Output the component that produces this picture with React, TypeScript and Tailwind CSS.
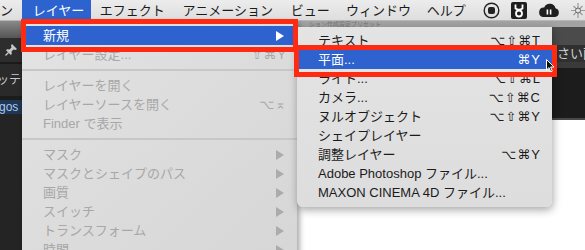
import React from "react";

const FONT = '"Liberation Sans", "DejaVu Sans", "Noto Sans CJK JP", sans-serif';

type MainItem =
  | { kind: "sep" }
  | { kind: "item"; label: string; shortcut?: string; arrow?: boolean; active?: boolean; disabled?: boolean };

const mainItems: MainItem[] = [
  { kind: "item", label: "新規", arrow: true, active: true },
  { kind: "item", label: "レイヤー設定...", shortcut: "⇧⌘Y", disabled: true },
  { kind: "sep" },
  { kind: "item", label: "レイヤーを開く", disabled: true },
  { kind: "item", label: "レイヤーソースを開く", shortcut: "⌥⌅", disabled: true },
  { kind: "item", label: "Finder で表示", disabled: true },
  { kind: "sep" },
  { kind: "item", label: "マスク", arrow: true, disabled: true },
  { kind: "item", label: "マスクとシェイプのパス", arrow: true, disabled: true },
  { kind: "item", label: "画質", arrow: true, disabled: true },
  { kind: "item", label: "スイッチ", arrow: true, disabled: true },
  { kind: "item", label: "トランスフォーム", arrow: true, disabled: true },
  { kind: "item", label: "時間", arrow: true, disabled: true },
];

const subItems: { label: string; shortcut?: string; active?: boolean }[] = [
  { label: "テキスト", shortcut: "⌥⇧⌘T" },
  { label: "平面...", shortcut: "⌘Y", active: true },
  { label: "ライト...", shortcut: "⌥⇧⌘L" },
  { label: "カメラ...", shortcut: "⌥⇧⌘C" },
  { label: "ヌルオブジェクト", shortcut: "⌥⇧⌘Y" },
  { label: "シェイプレイヤー" },
  { label: "調整レイヤー", shortcut: "⌥⌘Y" },
  { label: "Adobe Photoshop ファイル..." },
  { label: "MAXON CINEMA 4D ファイル..." },
];

function Arrow({ color }: { color: string }) {
  return (
    <svg width="8" height="10" viewBox="0 0 8 10">
      <path d="M0 0 L8 5 L0 10 Z" fill={color} />
    </svg>
  );
}

function MenuBar() {
  const items = [
    { t: "ン", w: "w-[22px]", pl: "pl-0" },
    { t: "レイヤー", w: "w-[70px]", pl: "pl-[11px]", active: true },
    { t: "エフェクト", w: "w-[84px]", pl: "pl-[9px]" },
    { t: "アニメーション", w: "w-[110px]", pl: "pl-[9px]" },
    { t: "ビュー", w: "w-[56px]", pl: "pl-[9px]" },
    { t: "ウィンドウ", w: "w-[82px]", pl: "pl-[9px]" },
    { t: "ヘルプ", w: "w-[60px]", pl: "pl-[9px]" },
  ];
  return (
    <div className="h-[21px] flex items-stretch bg-gradient-to-b from-[#ececec] to-[#dedede] border-b border-[#b8b8b8] text-[13px] text-[#1b1b1b]">
      {items.map((it) => (
        <div
          key={it.t}
          className={`${it.w} ${it.pl} flex items-center leading-none whitespace-nowrap overflow-hidden ${
            it.active ? "bg-[#2d63cf] text-white" : ""
          }`}
        >
          {it.t}
        </div>
      ))}
      <div className="flex items-center gap-[11px] pl-[6px]">
        <svg width="17" height="17" viewBox="0 0 17 17">
          <circle cx="8.5" cy="8.5" r="7.3" fill="none" stroke="#222" strokeWidth="1.4" />
          <rect x="5" y="5" width="7" height="7" rx="2" fill="#222" />
        </svg>
        <svg width="16" height="17" viewBox="0 0 16 17">
          <rect x="0" y="0" width="16" height="17" rx="2" fill="#1f1f1f" />
          <path d="M4.5 2.5 V6.5 Q8 9 11.5 6.5 V2.5" fill="none" stroke="#fff" strokeWidth="1.8" />
          <circle cx="8" cy="11.5" r="3" fill="none" stroke="#fff" strokeWidth="1.8" />
        </svg>
        <svg width="22" height="15" viewBox="0 0 22 15">
          <path
            d="M5 14 H17 A4.5 4.5 0 0 0 17.5 5.2 A6 6 0 0 0 6.2 4.5 A4.8 4.8 0 0 0 5 14 Z"
            fill="#1f1f1f"
          />
          <rect x="8.6" y="6.5" width="1.6" height="5" fill="#fff" />
          <rect x="11.8" y="6.5" width="1.6" height="5" fill="#fff" />
        </svg>
        <svg width="14" height="17" viewBox="0 0 14 17">
          <path d="M7 1 V16 M0 8.5 H14 M2.5 4 L11.5 13 M11.5 4 L2.5 13" stroke="#9a9a9a" strokeWidth="1.2" />
          <circle cx="7" cy="8.5" r="2.5" fill="#e3e3e3" stroke="#666" strokeWidth="1" />
        </svg>
      </div>
    </div>
  );
}

function Background() {
  return (
    <div className="flex h-[229px]">
      <div className="w-[22px] flex flex-col overflow-hidden">
        <div className="h-[17px] bg-gradient-to-b from-[#8a8a8a] to-[#555555]" />
        <div className="h-[24px] bg-[#2d2d2d] flex items-center justify-center">
          <svg width="12" height="12" viewBox="0 0 12 12">
            <path d="M7 0 L12 5 L10.5 6 L8.5 5.5 L6.5 7.5 L6.8 10 L5.8 11 L1 6.2 L2 5.2 L4.5 5.5 L6.5 3.5 L6 1.5 Z" fill="#c9c9c9" />
            <path d="M3.5 8.5 L0.5 11.5" stroke="#c9c9c9" strokeWidth="1.3" />
          </svg>
        </div>
        <div className="h-[2px] bg-[#1a1a1a]" />
        <div className="h-[32px] bg-[#2a2a2a] flex items-center text-[12px] leading-none text-[#c7c7c7] whitespace-nowrap">
          <span className="-ml-[3px]">ッテー</span>
        </div>
        <div className="h-[4px] bg-[#1c1c1c]" />
        <div className="h-[14px] bg-[#1f3754] flex items-center text-[12px] leading-none text-[#a9c8f2] whitespace-nowrap">
          <span className="-ml-[1px]">gos</span>
        </div>
        <div className="flex-1 bg-[#242424]" />
      </div>
      <div className="w-[275px] bg-[#2a2a2a]" />
      <div className="flex-1 flex flex-col overflow-hidden">
        <div className="h-[6px] bg-[#a3a3a3] flex items-center text-[6px] leading-[6px] text-[#777777] pl-[12px] whitespace-nowrap overflow-hidden">
          ション作成設定プリセット
        </div>
        <div className="h-[18px] bg-[#4b4b4b]" />
        <div className="h-[17px] bg-[#303030] flex items-center text-[13px] leading-none text-[#cfcfcf] whitespace-nowrap">
          <span className="ml-[260px]">さい画</span>
        </div>
        <div className="h-[6px] bg-[#3a3a3a]" />
        <div className="h-[50px] bg-[#1c1c1c]" />
        <div className="h-[2px] bg-[#4a4a4a]" />
        <div className="flex-1 bg-white" />
      </div>
    </div>
  );
}

function MainMenu() {
  return (
    <div className="absolute left-[22px] top-[21px] w-[275px] h-[250px] pt-[5px] bg-gradient-to-br from-[#e3e3e3] via-[#dcdcdc] to-[#d6d6d6] shadow-[2px_2px_6px_rgba(0,0,0,0.4)] text-[13px]">
      {mainItems.map((it, i) =>
        it.kind === "sep" ? (
          <div key={i} className="h-[12px] flex items-center">
            <div className="w-full h-[2px] bg-[#c7c7c7]" />
          </div>
        ) : (
          <div
            key={i}
            className={`h-[19px] flex items-center justify-between pl-[21px] leading-none whitespace-nowrap ${
              it.arrow ? "pr-[13px]" : "pr-[10px]"
            } ${it.active ? "bg-[#2d62cf] text-white" : it.disabled ? "text-[#a7a7a7]" : "text-[#1b1b1b]"}`}
          >
            <span>{it.label}</span>
            {it.shortcut && <span className="tracking-[1px]">{it.shortcut}</span>}
            {it.arrow && <Arrow color={it.active ? "#ffffff" : "#ababab"} />}
          </div>
        )
      )}
    </div>
  );
}

function SubMenu() {
  return (
    <div className="absolute left-[297px] top-[27px] w-[255px] h-[180px] pt-[4px] rounded-b-[6px] bg-gradient-to-b from-[#e4e4e4] to-[#dddddd] shadow-[1px_3px_8px_rgba(0,0,0,0.35)] text-[13px]">
      {subItems.map((it) => (
        <div
          key={it.label}
          className={`h-[19px] flex items-center justify-between pl-[21px] pr-[11px] leading-none whitespace-nowrap ${
            it.active ? "bg-[#2d62cf] text-white" : "text-[#1b1b1b]"
          }`}
        >
          <span>{it.label}</span>
          {it.shortcut && <span className="tracking-[1px]">{it.shortcut}</span>}
        </div>
      ))}
    </div>
  );
}

export default function App() {
  return (
    <div className="w-[585px] h-[250px] relative overflow-hidden bg-white" style={{ fontFamily: FONT }}>
      <MenuBar />
      <Background />
      <MainMenu />
      <SubMenu />
      <div className="absolute left-[21px] top-[19px] w-[277px] h-[33px] border-[5px] border-[#ff2a12]" />
      <div className="absolute left-[294px] top-[45px] w-[263px] h-[32px] border-[5px] border-[#ff2a12]" />
      <svg className="absolute left-[546px] top-[59px]" width="9" height="14" viewBox="0 0 9 14">
        <path d="M0.5 0.5 L0.5 11 L3 8.6 L4.8 12.8 L6.3 12.1 L4.6 8 L8 8 Z" fill="#111" stroke="#fff" strokeWidth="1" />
      </svg>
    </div>
  );
}
